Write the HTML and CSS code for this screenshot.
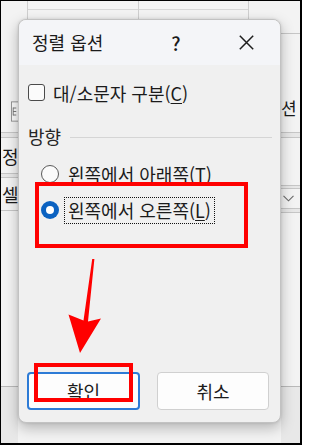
FILE: index.html
```html
<!DOCTYPE html>
<html lang="ko">
<head>
<meta charset="utf-8">
<title>정렬 옵션</title>
<link rel="stylesheet" href="styles.css">
</head>
<body>
<div class="frame">
  <div class="screen">
    <div class="top-strip">
      <div class="tcell c1"></div>
      <div class="tcell c2"><div class="tline"></div></div>
      <div class="tcell c3"><div class="tline"></div></div>
      <div class="tcell c4"></div>
    </div>
    <div class="middle">
      <div class="left-strip">
        <div class="blank h81"></div>
        <div class="licon">
          <svg width="8" height="23" viewBox="0 0 8 23"><rect x="0.5" y="0.5" width="9" height="22" fill="#fbfbfb" stroke="#8a8a8a"/><path d="M2.5 7.5H6M2.5 11.5H6M2.5 15.5H6M2.5 7V16" stroke="#6a6a6a" fill="none"/></svg>
        </div>
        <div class="blank h9"></div>
        <div class="sep s6"></div>
        <div class="scell h35">정</div>
        <div class="sep s5"></div>
        <div class="scell h32">셀</div>
        <div class="hline"></div>
        <div class="blank h175"></div>
        <div class="dark"></div>
      </div>
      <div class="under"></div>
      <div class="right-strip">
        <div class="blank h14"></div>
        <div class="hline"></div>
        <div class="rcell">션</div>
        <div class="sep s6"></div>
        <div class="blank h47"></div>
        <div class="sep s4"></div>
        <div class="chev"><svg width="11" height="7" viewBox="0 0 11 7"><path d="M0.5 0.8L5.5 5.8L10.5 0.8" stroke="#6a6a6a" fill="none" stroke-width="1.1"/></svg></div>
        <div class="sep s5"></div>
        <div class="blank h173"></div>
        <div class="dark"></div>
      </div>
    </div>
  </div>

  <div class="dialog">
    <div class="titlebar">
      <span class="title">정렬 옵션</span>
      <span class="tbtn help">?</span>
      <span class="tbtn close"><svg width="15" height="15" viewBox="0 0 15 15"><path d="M0.8 0.8L14.2 14.2M14.2 0.8L0.8 14.2" stroke="#1e1e1e" stroke-width="1.5" fill="none"/></svg></span>
    </div>
    <div class="dbody">
      <div class="check-row"><span class="checkbox"></span><span class="clabel">대/소문자 구분(<u>C</u>)</span></div>
      <div class="group-head"><span class="gtitle">방향</span><span class="rule"></span></div>
      <div class="radio-row first"><span class="radio"></span><span class="rlabel">왼쪽에서 아래쪽(<u>T</u>)</span></div>
      <div class="radio-row"><span class="radio on"></span><span class="rlabel focus">왼쪽에서 오른쪽(<u>L</u>)</span></div>
      <div class="buttons"><button class="btn primary">확인</button><button class="btn">취소</button></div>
    </div>
  </div>

  <div class="mark mark-radio"></div>
  <div class="mark mark-ok"></div>
  <svg class="arrow" width="302" height="445" viewBox="0 0 302 445"><polygon points="92.2,259 94.4,259 88,321.5 101,318.5 80,353 68.5,314.5 83.5,320.5" fill="#ff0000"/></svg>
</div>
</body>
</html>
```

FILE: styles.css
```css
html, body {
  margin: 0;
  padding: 0;
  background: #ffffff;
}

.frame {
  position: relative;
  width: 302px;
  height: 445px;
  box-sizing: border-box;
  border-style: solid;
  border-color: #000;
  border-width: 1px 2px 2px 1px;
  overflow: hidden;
  font-family: "Noto Sans CJK KR", "Noto Sans", sans-serif;
  color: #1b1b1b;
  background: #f3f3f3;
}

.screen {
  display: flex;
  flex-direction: column;
  height: 100%;
}

.top-strip {
  display: flex;
  height: 18px;
  flex: none;
}

.tcell {
  box-sizing: border-box;
  height: 18px;
}
.c1 { width: 26px; }
.c2 { width: 111px; border-left: 1px solid #cfcfcf; }
.c3 { width: 110px; border-left: 1px solid #cfcfcf; }
.c4 { flex: 1; border-left: 1px solid #cfcfcf; }
.tline { height: 8px; border-bottom: 1px solid #d6d6d6; }

.middle {
  display: flex;
  flex: 1;
}

.left-strip {
  width: 17px;
  display: flex;
  flex-direction: column;
  overflow: hidden;
}
.under { width: 263px; }
.right-strip {
  flex: 1;
  display: flex;
  flex-direction: column;
  overflow: hidden;
}

.blank { flex: none; }
.h9 { height: 9px; }
.h14 { height: 14px; }
.h47 { height: 47px; }
.h81 { height: 81px; }
.h173 { height: 173px; }
.h175 { height: 175px; }

.licon {
  height: 23px;
  padding-left: 10px;
  display: flex;
}

.sep {
  box-sizing: border-box;
  border-top: 1px solid #c6c6c6;
  border-bottom: 1px solid #c6c6c6;
  background: #e7e7e7;
  flex: none;
}
.s4 { height: 4px; }
.s5 { height: 5px; }
.s6 { height: 6px; }

.hline {
  height: 0;
  border-top: 1px solid #c6c6c6;
  flex: none;
}

.scell {
  font-size: 18px;
  line-height: 1;
  display: flex;
  align-items: center;
  padding-left: 1px;
  flex: none;
  white-space: nowrap;
}
.h35 { height: 35px; }
.h32 { height: 32px; }

.rcell {
  height: 98px;
  box-sizing: border-box;
  padding-top: 63px;
  font-size: 17px;
  line-height: 22px;
  white-space: nowrap;
  flex: none;
}

.chev {
  height: 19px;
  display: flex;
  align-items: center;
  padding-left: 2px;
  flex: none;
}

.dark {
  flex: 1;
  background: #e8e8e8;
  border-top: 1px solid #b9b9b9;
}

/* dialog */
.dialog {
  position: absolute;
  left: 17px;
  top: 18px;
  width: 263px;
  height: 404px;
  box-sizing: border-box;
  border: 1px solid #c2c2c2;
  border-radius: 8px;
  background: #f0f0f0;
  box-shadow: 0 5px 14px rgba(0, 0, 0, 0.26), 0 0 3px rgba(0, 0, 0, 0.12);
  display: flex;
  flex-direction: column;
  overflow: hidden;
}

.titlebar {
  height: 45px;
  flex: none;
  background: #f4f5f8;
  display: flex;
  align-items: center;
  padding: 0 14px 0 13px;
}

.title {
  font-size: 18px;
  line-height: 1;
  white-space: nowrap;
  margin-top: -2px;
}

.tbtn {
  width: 40px;
  height: 40px;
  display: flex;
  align-items: center;
  justify-content: center;
}
.help {
  margin-left: auto;
  font-size: 19px;
  font-weight: 500;
  line-height: 1;
}
.close { margin-left: 30px; }

.dbody {
  flex: 1;
  display: flex;
  flex-direction: column;
  padding: 0 8px 12px 9px;
}

.check-row {
  margin-top: 19px;
  height: 17px;
  display: flex;
  align-items: center;
  font-size: 18px;
}

.checkbox {
  width: 17px;
  height: 17px;
  box-sizing: border-box;
  border: 1px solid #4a4a4a;
  border-radius: 3px;
  background: #fbfbfb;
  flex: none;
}

.clabel {
  margin-left: 8px;
  line-height: 1;
  white-space: nowrap;
}

u { text-decoration-thickness: 1px; text-underline-offset: 2px; }

.group-head {
  margin-top: 25px;
  height: 20px;
  display: flex;
  align-items: center;
}
.gtitle {
  font-size: 18px;
  line-height: 1;
  color: #262626;
}
.rule {
  flex: 1;
  margin-left: 9px;
  margin-top: 2px;
  border-top: 1px solid #d5d5d5;
}

.radio-row {
  height: 28px;
  margin-top: 8px;
  display: flex;
  align-items: center;
  padding-left: 13px;
}
.radio-row.first { margin-top: 14px; }

.radio {
  width: 18px;
  height: 18px;
  box-sizing: border-box;
  border: 1px solid #5a5a5a;
  border-radius: 50%;
  background: #fbfbfb;
  flex: none;
  display: flex;
  align-items: center;
  justify-content: center;
}
.radio.on {
  border: none;
  background: #0b62c1;
}
.radio.on::after {
  content: "";
  width: 8px;
  height: 8px;
  border-radius: 50%;
  background: #ffffff;
}

.rlabel {
  margin-left: 5px;
  padding: 1px 3px;
  border: 1px dotted transparent;
  font-size: 18px;
  line-height: 23px;
  white-space: nowrap;
}
.rlabel.focus { border-color: #111; }

.buttons {
  margin-top: auto;
  margin-left: -1px;
  display: flex;
  gap: 17px;
}

.btn {
  width: 112px;
  height: 38px;
  box-sizing: border-box;
  border: 1px solid #d0d0d0;
  border-radius: 4px;
  background: #fdfdfd;
  font-family: "Noto Sans CJK KR", "Noto Sans", sans-serif;
  font-size: 18px;
  color: #1b1b1b;
  padding: 0;
  line-height: 1;
}
.btn.primary {
  width: 113px;
  border: 2px solid #2d7bd6;
}

/* annotations */
.mark {
  position: absolute;
  box-sizing: border-box;
  border: 4px solid #ff0000;
}
.mark-radio { left: 34px; top: 181px; width: 213px; height: 66px; }
.mark-ok { left: 33px; top: 362px; width: 99px; height: 39px; }

.arrow {
  position: absolute;
  left: -1px;
  top: -1px;
}
```
